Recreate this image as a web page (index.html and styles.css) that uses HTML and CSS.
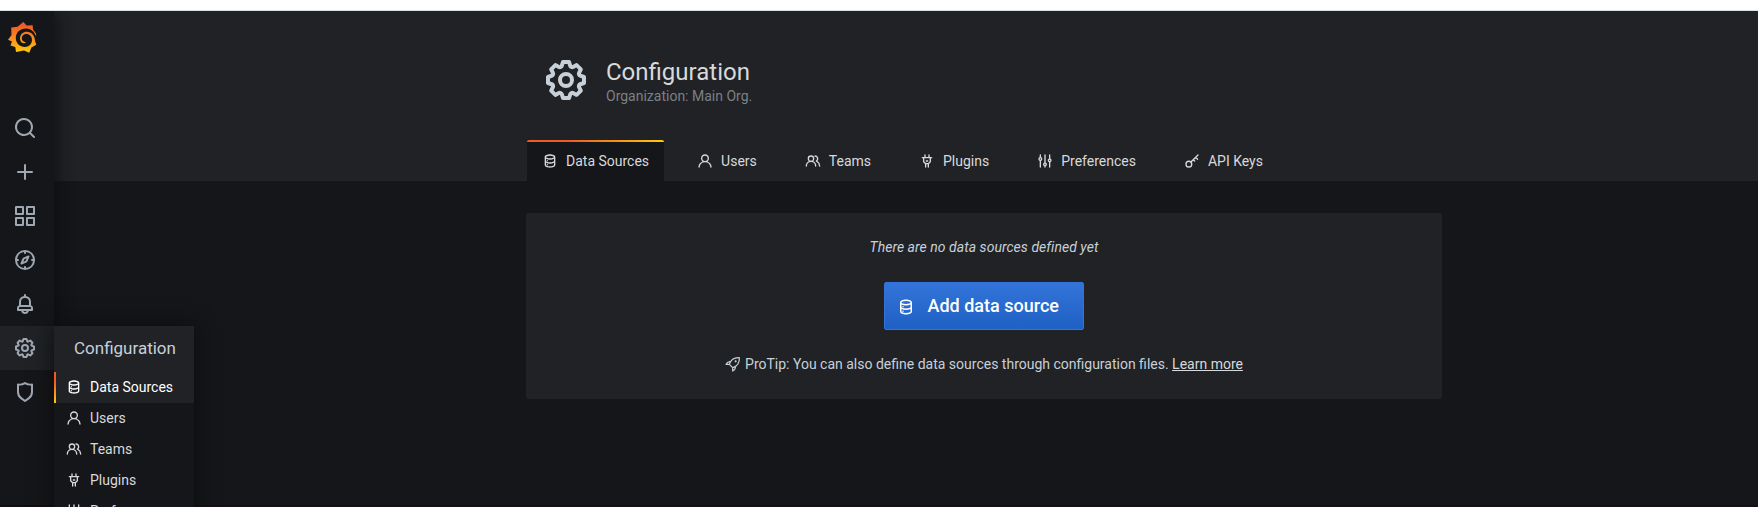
FILE: index.html
```html
<!DOCTYPE html>
<html lang="en">
<head>
<meta charset="utf-8">
<title>Configuration: Data Sources</title>
<link rel="stylesheet" href="styles.css">
</head>
<body>
<svg class="defs" width="0" height="0" aria-hidden="true">
  <defs>
    <linearGradient id="brand" x1="0" y1="0" x2="0" y2="1"><stop offset="0.1" stop-color="#f05a28"/><stop offset="0.55" stop-color="#f98f1d"/><stop offset="1" stop-color="#fbca0a"/></linearGradient>
  </defs>
  <symbol id="search" viewBox="0 0 24 24"><path d="M21.71,20.29,18,16.61A9,9,0,1,0,16.61,18l3.68,3.68a1,1,0,0,0,1.42,0A1,1,0,0,0,21.71,20.29ZM11,18a7,7,0,1,1,7-7A7,7,0,0,1,11,18Z"/></symbol>
  <symbol id="plus" viewBox="0 0 24 24"><path d="M19,11H13V5a1,1,0,0,0-2,0v6H5a1,1,0,0,0,0,2h6v6a1,1,0,0,0,2,0V13h6a1,1,0,0,0,0-2Z"/></symbol>
  <symbol id="apps" viewBox="0 0 24 24"><path d="M10,13H3a1,1,0,0,0-1,1v7a1,1,0,0,0,1,1h7a1,1,0,0,0,1-1V14A1,1,0,0,0,10,13ZM9,20H4V15H9ZM21,2H14a1,1,0,0,0-1,1v7a1,1,0,0,0,1,1h7a1,1,0,0,0,1-1V3A1,1,0,0,0,21,2ZM20,9H15V4h5Zm1,4H14a1,1,0,0,0-1,1v7a1,1,0,0,0,1,1h7a1,1,0,0,0,1-1V14A1,1,0,0,0,21,13Zm-1,7H15V15h5ZM10,2H3A1,1,0,0,0,2,3v7a1,1,0,0,0,1,1h7a1,1,0,0,0,1-1V3A1,1,0,0,0,10,2ZM9,9H4V4H9Z"/></symbol>
  <symbol id="compass" viewBox="0 0 24 24"><path d="M12,2A10,10,0,1,0,22,12,10,10,0,0,0,12,2Zm1,17.93V19a1,1,0,0,0-2,0v.93A8,8,0,0,1,4.07,13H5a1,1,0,0,0,0-2H4.07A8,8,0,0,1,11,4.07V5a1,1,0,0,0,2,0V4.07A8,8,0,0,1,19.93,11H19a1,1,0,0,0,0,2h.93A8,8,0,0,1,13,19.93ZM15.14,7.55l-5,2.12a1,1,0,0,0-.52.52l-2.12,5a1,1,0,0,0,.21,1.1,1,1,0,0,0,.7.29.93.93,0,0,0,.4-.09l5-2.12a1,1,0,0,0,.52-.52l2.12-5a1,1,0,0,0-1.31-1.31Zm-2.49,5.1-2.28,1,1-2.28,2.28-1Z"/></symbol>
  <symbol id="bell" viewBox="0 0 24 24"><path d="M18,13.18V10a6,6,0,0,0-5-5.91V3a1,1,0,0,0-2,0V4.09A6,6,0,0,0,6,10v3.18A3,3,0,0,0,4,16v2a1,1,0,0,0,1,1H8.14a4,4,0,0,0,7.72,0H19a1,1,0,0,0,1-1V16A3,3,0,0,0,18,13.18ZM8,10a4,4,0,0,1,8,0v3H8Zm4,10a2,2,0,0,1-1.72-1h3.44A2,2,0,0,1,12,20Zm6-3H6V16a1,1,0,0,1,1-1H17a1,1,0,0,1,1,1Z"/></symbol>
  <symbol id="cog" viewBox="0 0 24 24"><path d="M21.32,9.55l-1.89-.63.89-1.78A1,1,0,0,0,20.13,6L18,3.87a1,1,0,0,0-1.15-.19l-1.78.89-.63-1.89A1,1,0,0,0,13.5,2h-3a1,1,0,0,0-.95.68L8.92,4.57,7.14,3.68A1,1,0,0,0,6,3.87L3.87,6a1,1,0,0,0-.19,1.15l.89,1.78-1.89.63A1,1,0,0,0,2,10.5v3a1,1,0,0,0,.68.95l1.89.63-.89,1.78A1,1,0,0,0,3.87,18L6,20.13a1,1,0,0,0,1.15.19l1.78-.89.63,1.89a1,1,0,0,0,.95.68h3a1,1,0,0,0,.95-.68l.63-1.89,1.78.89A1,1,0,0,0,18,20.13L20.13,18a1,1,0,0,0,.19-1.15l-.89-1.78,1.89-.63A1,1,0,0,0,22,13.5v-3A1,1,0,0,0,21.32,9.55ZM20,12.78l-1.2.4A2,2,0,0,0,17.64,16l.57,1.14-1.1,1.1L16,17.64a2,2,0,0,0-2.79,1.16l-.4,1.2H11.22l-.4-1.2A2,2,0,0,0,8,17.64l-1.14.57-1.1-1.1L6.36,16A2,2,0,0,0,5.2,13.18L4,12.78V11.22l1.2-.4A2,2,0,0,0,6.36,8L5.79,6.89l1.1-1.1L8,6.36A2,2,0,0,0,10.82,5.2l.4-1.2h1.56l.4,1.2A2,2,0,0,0,16,6.36l1.14-.57,1.1,1.1L17.64,8a2,2,0,0,0,1.16,2.79l1.2.4ZM12,8a4,4,0,1,0,4,4A4,4,0,0,0,12,8Zm0,6a2,2,0,1,1,2-2A2,2,0,0,1,12,14Z"/></symbol>
  <symbol id="shield" viewBox="0 0 24 24"><path d="M19.63,3.65a1,1,0,0,0-.84-.2,8,8,0,0,1-6.22-1.27,1,1,0,0,0-1.14,0A8,8,0,0,1,5.21,3.45a1,1,0,0,0-.84.2A1,1,0,0,0,4,4.43v7.45a9,9,0,0,0,3.77,7.33l3.65,2.6a1,1,0,0,0,1.16,0l3.65-2.6A9,9,0,0,0,20,11.88V4.43A1,1,0,0,0,19.63,3.65ZM18,11.88a7,7,0,0,1-2.93,5.7L12,19.77,8.93,17.58A7,7,0,0,1,6,11.88V5.58a10,10,0,0,0,6-1.39,10,10,0,0,0,6,1.39Z"/></symbol>
  <symbol id="database" viewBox="0 0 24 24"><path d="M8,16.5a1,1,0,1,0,1,1A1,1,0,0,0,8,16.5ZM12,2C8,2,4,3.37,4,6V18c0,2.63,4,4,8,4s8-1.37,8-4V6C20,3.37,16,2,12,2Zm6,16c0,.71-2.28,2-6,2s-6-1.29-6-2V14.73A13.16,13.16,0,0,0,12,16a13.16,13.16,0,0,0,6-1.27Zm0-6c0,.71-2.28,2-6,2s-6-1.29-6-2V8.73A13.16,13.16,0,0,0,12,10a13.16,13.16,0,0,0,6-1.27ZM12,8C8.28,8,6,6.71,6,6s2.28-2,6-2,6,1.29,6,2S15.72,8,12,8ZM8,10.5a1,1,0,1,0,1,1A1,1,0,0,0,8,10.5Z"/></symbol>
  <symbol id="user" viewBox="0 0 24 24"><path d="M15.71,12.71a6,6,0,1,0-7.42,0,10,10,0,0,0-6.22,8.18,1,1,0,0,0,2,.22,8,8,0,0,1,15.9,0,1,1,0,0,0,1,.89h.11a1,1,0,0,0,.88-1.1A10,10,0,0,0,15.71,12.71ZM12,12a4,4,0,1,1,4-4A4,4,0,0,1,12,12Z"/></symbol>
  <symbol id="users" viewBox="0 0 24 24"><path d="M12.3,12.22A4.92,4.92,0,0,0,14,8.5a5,5,0,0,0-10,0,4.92,4.92,0,0,0,1.7,3.72A8,8,0,0,0,1,19.5a1,1,0,0,0,2,0,6,6,0,0,1,12,0,1,1,0,0,0,2,0A8,8,0,0,0,12.3,12.22ZM9,11.5a3,3,0,1,1,3-3A3,3,0,0,1,9,11.5Zm9.74.32A5,5,0,0,0,15,3.5a1,1,0,0,0,0,2,3,3,0,0,1,3,3,3,3,0,0,1-1.5,2.59,1,1,0,0,0-.5.84,1,1,0,0,0,.45.86l.39.26.13.07a7,7,0,0,1,4,6.38,1,1,0,0,0,2,0A9,9,0,0,0,18.74,11.82Z"/></symbol>
  <symbol id="plug" viewBox="0 0 24 24"><path d="M19,6H16V3a1,1,0,0,0-2,0V6H10V3A1,1,0,0,0,8,3V6H5A1,1,0,0,0,5,8H6v5a1,1,0,0,0,.29.71L9,16.41V21a1,1,0,0,0,2,0V17h2v4a1,1,0,0,0,2,0V16.41l2.71-2.7A1,1,0,0,0,18,13V8h1a1,1,0,0,0,0-2Zm-3,6.59L13.59,15H10.41L8,12.59V8h8ZM11,13h2a1,1,0,0,0,0-2H11a1,1,0,0,0,0,2Z"/></symbol>
  <symbol id="sliders" viewBox="0 0 24 24"><path d="M20,8.18V3a1,1,0,0,0-2,0V8.18a3,3,0,0,0,0,5.64V21a1,1,0,0,0,2,0V13.82a3,3,0,0,0,0-5.64ZM19,12a1,1,0,1,1,1-1A1,1,0,0,1,19,12Zm-6,2.18V3a1,1,0,0,0-2,0V14.18a3,3,0,0,0,0,5.64V21a1,1,0,0,0,2,0V19.82a3,3,0,0,0,0-5.64ZM12,18a1,1,0,1,1,1-1A1,1,0,0,1,12,18ZM6,6.18V3A1,1,0,0,0,4,3V6.18a3,3,0,0,0,0,5.64V21a1,1,0,0,0,2,0V11.82A3,3,0,0,0,6,6.18ZM5,10A1,1,0,1,1,6,9,1,1,0,0,1,5,10Z"/></symbol>
  <symbol id="key" viewBox="0 0 24 24"><g fill="none" stroke="currentColor" stroke-width="2" stroke-linecap="round" stroke-linejoin="round"><circle cx="7.300" cy="16.700" r="4.300"/><path d="M10.400 13.600 21 3M17.500 6.500l2.800 2.800M14 10l2 2"/></g></symbol>
  <symbol id="rocket" viewBox="0 0 24 24"><g fill="none" stroke="currentColor" stroke-width="1.800" stroke-linecap="round" stroke-linejoin="round"><path d="M6.500 12.500C8.500 6.500 14 2 21.500 2.500 22 10 17.500 15.500 11.500 17.500ZM8.500 8.500C5.500 8 3.500 9 1.500 12.500l5 0M15.500 15.500C16 18.500 15 20.500 11.500 22.500l0-5"/></g><circle cx="16" cy="8" r="1.600"/></symbol>
</svg>
<div class="topline"></div>
<div class="app">
  <nav class="sidemenu">
    <a class="logo"><svg width="29" height="31" viewBox="0 0 29 31"><path fill="url(#brand)" d="M15.300 0 18.600 3.600 24.700 3.300 25 7.600 28 11.500 28.200 14.500C26.500 10 23.500 6.600 18.500 6.400 12 6.100 7.800 10.700 7.800 15.800 7.800 21.300 11.800 25 16.800 25 20.900 25 23.900 21.800 24 18 24.100 14.500 21.500 12 18.400 12 15.600 12 13.700 14 13.800 16.600 13.900 18.800 15.500 20.300 18 20.200 16.800 21.600 14.300 21.500 13 19.700 10.800 16.500 12.300 11 17.300 9.800 23 8.800 27 13.400 27 19L28.300 22.800 23.400 25.500 21.300 30.800 16 28.500 8 30 7.300 24.900 2.500 23.500 4 19.400 0 17.800 3.500 13 3.200 5.500 9.500 4.800Z"/></svg></a>
    <div class="menu">
      <a class="item"><svg class="i24"><use href="#search"/></svg></a>
      <a class="item"><svg class="i24"><use href="#plus"/></svg></a>
      <a class="item"><svg class="i24"><use href="#apps"/></svg></a>
      <a class="item"><svg class="i24"><use href="#compass"/></svg></a>
      <a class="item"><svg class="i24"><use href="#bell"/></svg></a>
      <div class="item open"><svg class="i24"><use href="#cog"/></svg>
        <div class="flyout">
          <div class="flyout-title">Configuration</div>
          <a class="sub current"><svg class="i16"><use href="#database"/></svg>Data Sources</a>
          <a class="sub"><svg class="i16"><use href="#user"/></svg>Users</a>
          <a class="sub"><svg class="i16"><use href="#users"/></svg>Teams</a>
          <a class="sub"><svg class="i16"><use href="#plug"/></svg>Plugins</a>
          <a class="sub"><svg class="i16"><use href="#sliders"/></svg>Preferences</a>
        </div>
      </div>
      <a class="item"><svg class="i24"><use href="#shield"/></svg></a>
    </div>
  </nav>
  <main class="page">
    <header class="header">
      <div class="container">
        <div class="heading">
          <svg class="i48"><use href="#cog"/></svg>
          <div><h1>Configuration</h1><div class="org">Organization: Main Org.</div></div>
        </div>
        <div class="tabs">
          <a class="tab active"><svg class="i16"><use href="#database"/></svg>Data Sources</a>
          <a class="tab"><svg class="i16"><use href="#user"/></svg>Users</a>
          <a class="tab"><svg class="i16"><use href="#users"/></svg>Teams</a>
          <a class="tab"><svg class="i16"><use href="#plug"/></svg>Plugins</a>
          <a class="tab"><svg class="i16"><use href="#sliders"/></svg>Preferences</a>
          <a class="tab"><svg class="i16"><use href="#key"/></svg>API Keys</a>
        </div>
      </div>
    </header>
    <section class="card">
      <div class="empty">There are no data sources defined yet</div>
      <a class="button"><svg class="i18"><use href="#database"/></svg>Add data source</a>
      <div class="tip"><svg class="i16"><use href="#rocket"/></svg><span>ProTip: You can also define data sources through configuration files. <a class="link">Learn more</a></span></div>
    </section>
  </main>
</div>
<div class="baseline"></div>
</body>
</html>
```
FILE: styles.css
```css
* { box-sizing: border-box; }
body {
  margin: 0;
  height: 507px;
  overflow: hidden;
  display: flex;
  flex-direction: column;
  background: #151619;
  color: #c7d0d9;
  font: 14px/21px Roboto, sans-serif;
}
svg { display: block; flex: none; fill: currentColor; }
.defs { position: absolute; }
.i16 { width: 16px; height: 16px; }
.i18 { width: 18px; height: 18px; margin-top: 4px; }
.i24 { width: 24px; height: 24px; }
.i48 { width: 48px; height: 48px; }
.topline {
  position: relative;
  z-index: 2;
  height: 11px;
  flex: none;
  background: #fff;
  border-bottom: 1px solid #dadedf;
}
.app { display: flex; flex: 1; min-height: 0; }
.baseline { height: 2px; flex: none; background: #160f19; }

.sidemenu {
  width: 54px;
  flex: none;
  position: relative;
  z-index: 1;
  background: #151619;
  box-shadow: 0 0 20px #0b0c0e;
  color: #9fa7b3;
}
.logo { display: block; padding: 11px 0 0 8px; height: 95px; }
.item { display: flex; align-items: center; height: 44px; padding-left: 13px; }
.open { position: relative; background: #202226; }
.flyout {
  position: absolute;
  left: 54px;
  top: 0;
  width: 140px;
  background: #151619;
  box-shadow: 0 0 20px #0b0c0e;
}
.flyout-title {
  height: 46px;
  padding-left: 20px;
  line-height: 44px;
  font-size: 17px;
  background: #202226;
  color: #c7d0d9;
}
.sub { display: flex; align-items: center; gap: 8px; height: 31px; padding-left: 12px; color: #d8d9da; }
.sub .i16 { margin-bottom: 1px; }
.current {
  background: linear-gradient(#f05a28 30%, #fbca0a) left / 2px 100% no-repeat #202226;
  color: #fff;
}

.page { flex: 1; }
.header { height: 170px; background: #202226; border-bottom: 1px solid #232427; }
.container { width: 916px; height: 170px; margin-left: 472px; padding-left: 1px; }
.heading { display: flex; gap: 16px; height: 129px; padding: 45px 0 0 15px; }
h1 { margin: 3px 0 0; font-size: 24px; line-height: 27px; font-weight: 400; color: #d8d9da; }
.org { line-height: 21px; color: #7b8087; }
.tabs { display: flex; gap: 18px; }
.tab { display: flex; align-items: center; gap: 8px; height: 41px; padding: 1px 15px 0; color: #d8d9da; }
.active { background: linear-gradient(90deg, #f05a28 30%, #fbca0a) top / 100% 2px no-repeat #151619; border-radius: 2px 2px 0 0; }

.card {
  width: 916px;
  height: 186px;
  margin: 32px 0 0 472px;
  padding-top: 24px;
  display: flex;
  flex-direction: column;
  align-items: center;
  background: #202226;
  border-radius: 3px;
}
.empty { font-style: italic; letter-spacing: 0.04px; }
.button {
  display: flex;
  align-items: center;
  gap: 12.5px;
  width: 200px;
  height: 48px;
  margin-top: 24px;
  padding: 0 0 2px 12px;
  border: 1px solid #3274d9;
  border-radius: 2px;
  background: linear-gradient(#3274d9, #1f60c4);
  color: #fff;
  font-size: 18px;
  font-weight: 500;
}
.tip { display: flex; align-items: center; gap: 4px; margin-top: 24px; }
.tip .i16 { margin-bottom: 1px; }
.link { color: #d8d9da; text-decoration: underline; }
```
